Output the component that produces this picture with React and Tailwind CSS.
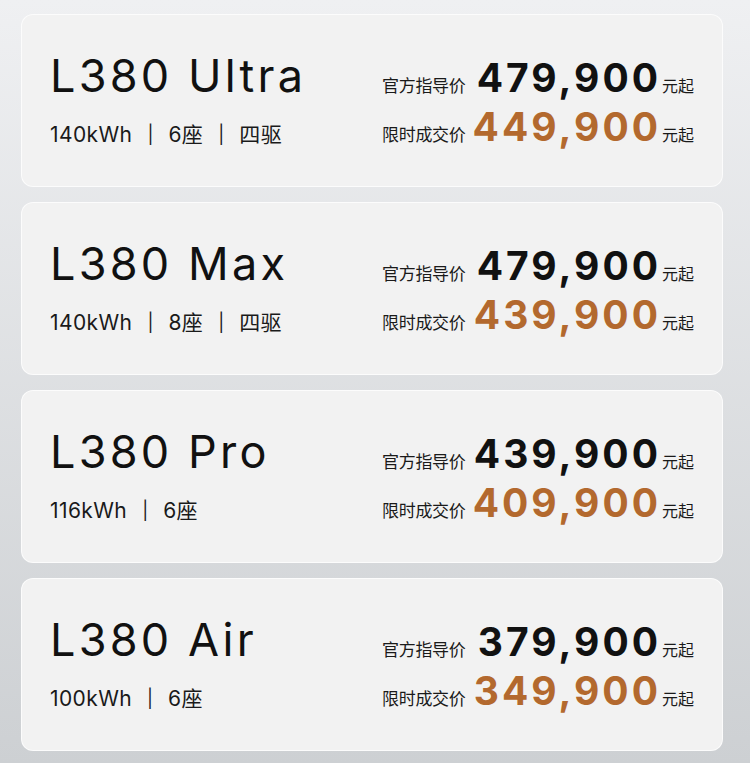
import React from "react";

const cars = [
  { name: "L380 Ultra", specs: ["140kWh", "6座", "四驱"], guide: "479,900", deal: "449,900" },
  { name: "L380 Max", specs: ["140kWh", "8座", "四驱"], guide: "479,900", deal: "439,900" },
  { name: "L380 Pro", specs: ["116kWh", "6座"], guide: "439,900", deal: "409,900" },
  { name: "L380 Air", specs: ["100kWh", "6座"], guide: "379,900", deal: "349,900" },
];

const font = { fontFamily: 'Inter, "Noto Sans CJK SC", sans-serif' };

function PriceRow({ label, price, orange }) {
  return (
    <div className="flex items-baseline h-[44px] leading-[44px]">
      <span className="w-[84px] text-[17px] text-[#1a1a1a] tracking-[-0.3px]">{label}</span>
      <span
        className={
          "flex-1 text-right text-[39px] font-bold tracking-[3px] " +
          (orange ? "text-[#b3692e]" : "text-[#111111]")
        }
      >
        {price}
      </span>
      <span className="ml-[1px] text-[16px] text-[#1a1a1a]">元起</span>
    </div>
  );
}

function Card({ car }) {
  return (
    <div className="h-[173px] rounded-[12px] bg-[#f2f2f2] border border-white/80 flex justify-between px-[28px]">
      <div className="pt-[36px]">
        <div className="text-[45px] leading-[50px] tracking-[3.2px] text-[#111111]">{car.name}</div>
        <div className="mt-[22px] h-[24px] leading-[24px] text-[21px] text-[#1a1a1a] flex items-center">
          {car.specs.map((s, i) => (
            <React.Fragment key={i}>
              {i > 0 && <span className="mx-[15px] text-[18px]">|</span>}
              <span className="tracking-[0.4px]">{s}</span>
            </React.Fragment>
          ))}
        </div>
      </div>
      <div className="pt-[41px] w-[312px] flex flex-col gap-[5px]">
        <PriceRow label="官方指导价" price={car.guide} />
        <PriceRow label="限时成交价" price={car.deal} orange />
      </div>
    </div>
  );
}

export default function App() {
  return (
    <div
      className="w-[750px] h-[763px] bg-gradient-to-b from-[#eff0f2] to-[#cdd0d3] pt-[14px] pl-[21px] pr-[27px] flex flex-col gap-[15px]"
      style={font}
    >
      {cars.map((c) => (
        <Card key={c.name} car={c} />
      ))}
    </div>
  );
}
